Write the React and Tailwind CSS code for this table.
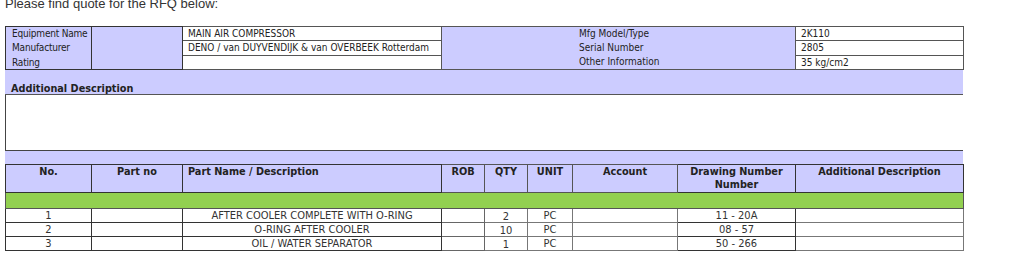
import React from 'react';

const equipment = [
  { label: 'Equipment Name', value: 'MAIN AIR COMPRESSOR', otherLabel: 'Mfg Model/Type', otherValue: '2K110' },
  { label: 'Manufacturer', value: 'DENO / van DUYVENDIJK & van OVERBEEK Rotterdam', otherLabel: 'Serial Number', otherValue: '2805' },
  { label: 'Rating', value: '', otherLabel: 'Other Information', otherValue: '35 kg/cm2' },
];

const items = [
  { no: 1, partNo: '', name: 'AFTER COOLER COMPLETE WITH O-RING', rob: '', qty: 2, unit: 'PC', account: '', drawing: '11 - 20A', desc: '' },
  { no: 2, partNo: '', name: 'O-RING AFTER COOLER', rob: '', qty: 10, unit: 'PC', account: '', drawing: '08 - 57', desc: '' },
  { no: 3, partNo: '', name: 'OIL / WATER SEPARATOR', rob: '', qty: 1, unit: 'PC', account: '', drawing: '50 - 266', desc: '' },
];

function App() {
  return (
    <div className="min-h-screen bg-white text-[#222]">
      {/* Intro line, scrolled half out of view */}
      <p className="mt-[-4px] ml-[5px] font-['Liberation_Sans',Arial,sans-serif] text-[13px] leading-[16px] text-[#333]">
        Please find quote for the RFQ below:
      </p>

      <div className="ml-[5px] mt-[14px] w-[958px] font-['DejaVu_Sans_Condensed','DejaVu_Sans',sans-serif] text-[10px] leading-[13px]">
        {/* Equipment details */}
        <table className="w-full table-fixed border-collapse">
          <colgroup>
            <col className="w-[86px]" />
            <col className="w-[91px]" />
            <col className="w-[259px]" />
            <col className="w-[354px]" />
            <col className="w-[168px]" />
          </colgroup>
          <tbody>
            {equipment.map((row, i) => (
              <tr key={row.label} className="h-[14px]">
                <td className={`bg-[#ccccff] border-l border-r border-[#333] p-0 pl-[6px] whitespace-nowrap tracking-[-0.2px] ${i === 0 ? 'border-t' : ''} ${i === 2 ? 'border-b' : ''}`}>
                  {row.label}
                </td>
                {i === 0 && <td rowSpan={3} className="bg-[#ccccff] border border-[#333] p-0" />}
                <td className="border border-[#555] px-[5px] py-0 bg-white whitespace-nowrap">{row.value}</td>
                {i === 0 && (
                  <td rowSpan={3} className="bg-[#ccccff] border border-[#555] p-0 pl-[137px] align-top">
                    {equipment.map((r) => (
                      <div key={r.otherLabel} className="h-[14px] leading-[14px]">{r.otherLabel}</div>
                    ))}
                  </td>
                )}
                <td className="border border-[#555] px-[5px] py-0 bg-white">{row.otherValue}</td>
              </tr>
            ))}
          </tbody>
        </table>

        {/* Additional description */}
        <div className="h-[25px] bg-[#ccccff] border-b border-[#555] flex items-end px-[6px] pb-0 leading-[11px] font-bold text-[10.8px]">
          Additional Description
        </div>
        <div className="h-[56px] bg-white border-l border-b border-[#444]" />
        <div className="h-[13px] bg-[#ccccff]" />

        {/* Parts list */}
        <table className="w-full table-fixed border-collapse">
          <colgroup>
            <col className="w-[86px]" />
            <col className="w-[91px]" />
            <col className="w-[259px]" />
            <col className="w-[43px]" />
            <col className="w-[43px]" />
            <col className="w-[45px]" />
            <col className="w-[105px]" />
            <col className="w-[118px]" />
            <col className="w-[168px]" />
          </colgroup>
          <thead>
            <tr className="h-[28px] bg-[#ccccff] font-bold text-[10.8px]">
              <th className="border border-[#333] align-top text-center p-0">No.</th>
              <th className="border border-[#333] align-top text-center p-0">Part no</th>
              <th className="border border-[#333] align-top text-left p-0 px-[5px]">Part Name / Description</th>
              <th className="border border-[#555] align-top text-center p-0">ROB</th>
              <th className="border border-[#555] align-top text-center p-0">QTY</th>
              <th className="border border-[#555] align-top text-center p-0">UNIT</th>
              <th className="border border-[#555] align-top text-center p-0">Account</th>
              <th className="border border-[#333] align-top text-center p-0">Drawing Number<br />Number</th>
              <th className="border border-[#333] align-top text-center p-0">Additional Description</th>
            </tr>
          </thead>
          <tbody>
            <tr className="h-[16px]">
              <td colSpan={9} className="bg-[#92d050] border border-[#555] p-0" />
            </tr>
            {items.map((item) => (
              <tr key={item.no} className="h-[14px] bg-white text-center text-[11px] leading-[12px] text-[#333]">
                <td className="border border-[#333] p-0">{item.no}</td>
                <td className="border border-[#333] p-0">{item.partNo}</td>
                <td className="border border-[#333] p-0">{item.name}</td>
                <td className="border border-[#666] p-0">{item.rob}</td>
                <td className="border border-[#777] p-0 pt-[2px] leading-[11px]">{item.qty}</td>
                <td className="border border-[#777] p-0">{item.unit}</td>
                <td className="border border-[#777] p-0">{item.account}</td>
                <td className="border border-[#333] p-0">{item.drawing}</td>
                <td className="border border-[#777] p-0">{item.desc}</td>
              </tr>
            ))}
          </tbody>
        </table>
      </div>
    </div>
  );
}

export default App;
